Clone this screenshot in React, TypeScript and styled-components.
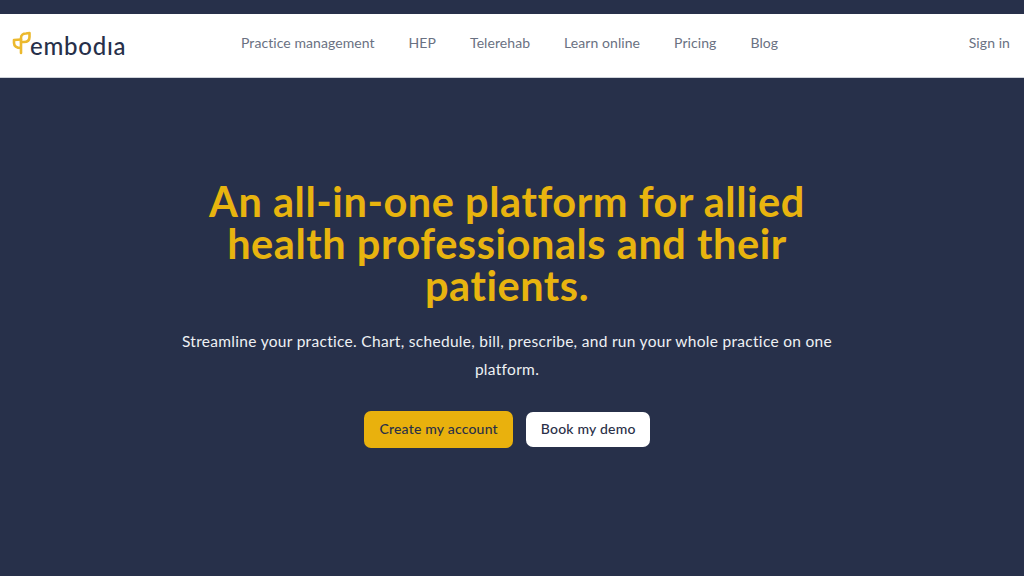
import React from "react";
import styled, { createGlobalStyle } from "styled-components";

const Global = createGlobalStyle`
  html, body { margin: 0; padding: 0; background: #27304a; }
  * { box-sizing: border-box; }
`;
const Page = styled.div`
  width: 1024px; height: 576px; overflow: hidden; background: #27304a;
  padding-top: 14px; font-family: "Lato", sans-serif;
`;
const Header = styled.header`
  height: 64px; background: #fff; display: flex; align-items: center;
  border-bottom: 1px solid #cfd3da; padding: 0 14px 0 12px;
`;
const Logo = styled.div`
  display: flex; align-items: center; width: 229px; color: #27304a;
  font-size: 24px; font-weight: 500; letter-spacing: 0.75px; margin-top: -1px;
`;
const LogoMark = styled.svg`
  flex: none; margin-top: -4px; margin-right: -1px;
`;
const Nav = styled.nav`display: flex; gap: 34px; flex: 1; margin-top: -6px;`;
const NavLink = styled.a`font-size: 14px; letter-spacing: 0.07px; color: #6a7182;`;
const SignIn = styled(NavLink)`margin-top: -6px;`;
const Hero = styled.main`
  display: flex; flex-direction: column; align-items: center;
  padding: 102px 10px 0 0;
`;
const Title = styled.h1`
  margin: 0; width: 640px; text-align: center; color: #e8b40f;
  font-size: 41.5px; line-height: 42px; font-weight: 700; letter-spacing: 0.55px;
`;
const Sub = styled.p`
  margin: 21px 0 0; width: 680px; text-align: center; color: #eef0f4;
  font-size: 15.5px; line-height: 28px; letter-spacing: 0.3px;
`;
const Buttons = styled.div`display: flex; gap: 13px; margin-top: 28px;`;
const Button = styled.button<{ $primary?: boolean }>`
  height: ${p => (p.$primary ? 37 : 35)}px;
  margin-top: ${p => (p.$primary ? 0 : 1)}px;
  padding: 0 ${p => (p.$primary ? 15.5 : 14.5)}px 2px; border-radius: 7px; border: none;
  background: ${p => (p.$primary ? "#e9b10d" : "#fff")};
  color: #2a3048; font: 500 14px "Lato", sans-serif; letter-spacing: 0.2px;
`;

export default function App() {
  return (
    <Page>
      <Global />
      <Header>
        <Logo>
          <LogoMark width="19" height="24" viewBox="0 0 19 24" fill="none" stroke="#ecb92e" strokeWidth="2.6" strokeLinejoin="round" strokeLinecap="round">
            <path d="M9 7 C9 4 11 2.5 14 2.5 L17.5 2 L17.5 6 C17.5 9.5 15 11 12 11 L9 11 Z" />
            <path d="M9 11 L9 22 M9 17 C4.5 17 2 15 2 12 L2 9 L9 8.5" />
          </LogoMark>
          embodıa
        </Logo>
        <Nav>
          {["Practice management", "HEP", "Telerehab", "Learn online", "Pricing", "Blog"].map(t => (
            <NavLink key={t}>{t}</NavLink>
          ))}
        </Nav>
        <SignIn>Sign in</SignIn>
      </Header>
      <Hero>
        <Title>An all-in-one platform for allied health professionals and their patients.</Title>
        <Sub>Streamline your practice. Chart, schedule, bill, prescribe, and run your whole practice on one platform.</Sub>
        <Buttons>
          <Button $primary>Create my account</Button>
          <Button>Book my demo</Button>
        </Buttons>
      </Hero>
    </Page>
  );
}
